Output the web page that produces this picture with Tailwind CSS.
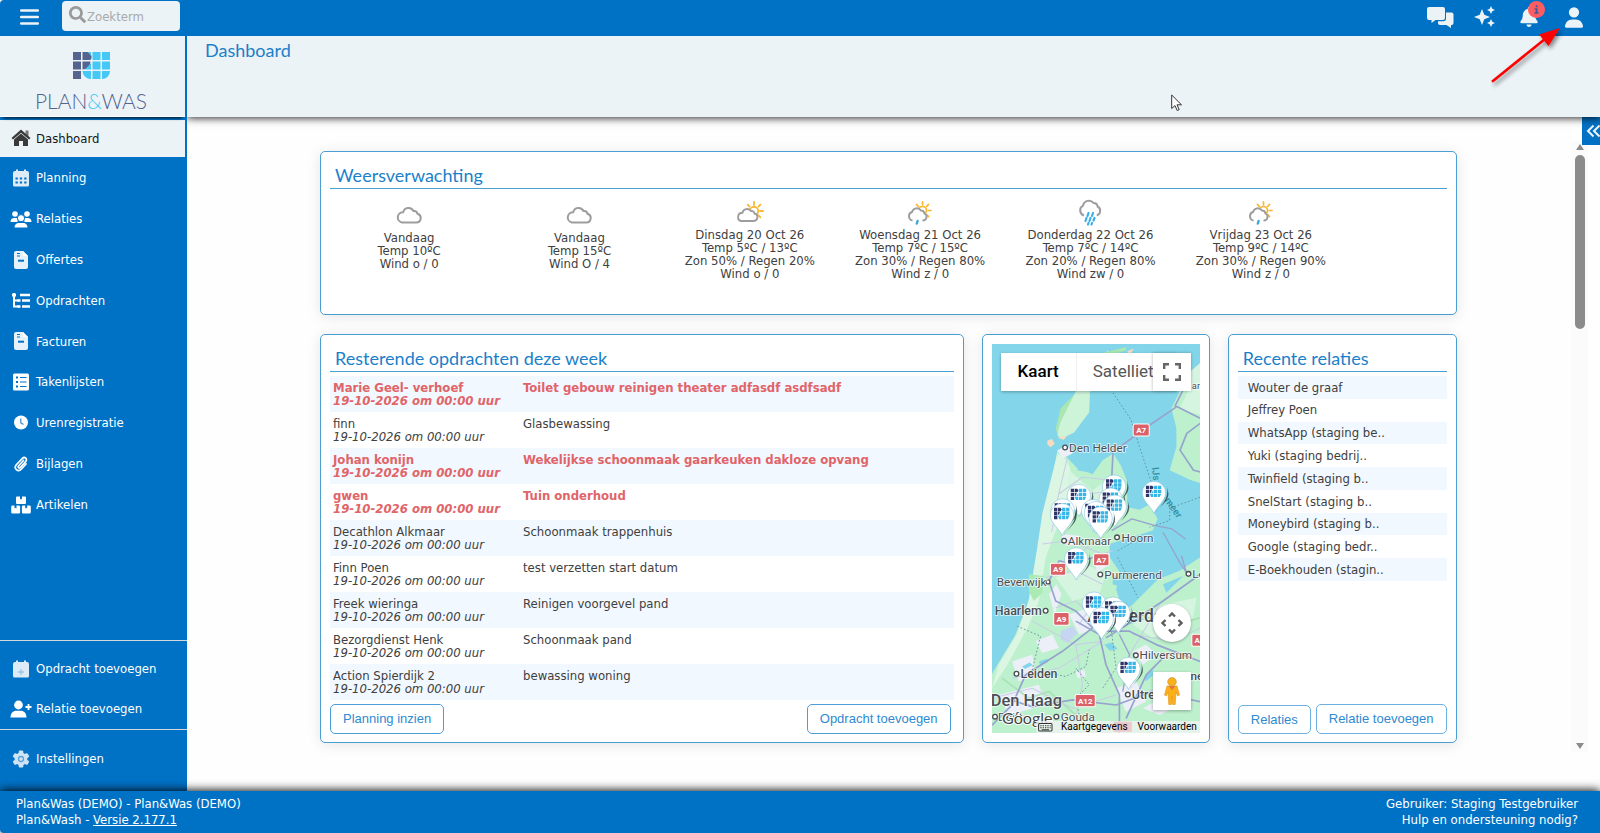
<!DOCTYPE html>
<html lang="nl">
<head>
<meta charset="utf-8">
<title>Plan&amp;Was - Dashboard</title>
<script src="https://cdn.jsdelivr.net/npm/@tailwindcss/browser@4"></script>
</head>
<body class="bg-white">
<svg class="hidden" aria-hidden="true">
  <defs>
    <symbol id="mark" viewBox="0 0 37 27">
      <g fill="#55648f"><path d="M0 0h8v8H0zM0 9.500h8v8H0zM0 19h8v8H0zM9.500 0H13a5 5 0 0 1 4.500 8h-8zM9.500 9.500h8a8 8 0 0 1-8 8z"/></g>
      <g fill="#45c8f5"><path d="M15 0h3v4zM19.500 0h8v8h-8zM29 0h8v8h-8zM19.500 9.500h8v8h-8zM29 9.500h8v8h-8zM18 11v6.500h-6zM9.500 19H18v8a8 8 0 0 1-8.500-8zM19.500 19h8v8h-8zM29 19h8a8 8 0 0 1-8 8z"/></g>
    </symbol>
    <symbol id="pin" viewBox="0 0 84 104" overflow="visible">
      <path d="M40 99C46 80 82 62 79 36L74 14C84 60 50 76 40 99z" fill="#243238" opacity=".75"/>
      <path d="M36 97C28 76 1 60 1 35a35 34 0 0 1 70 0C71 60 44 76 36 97z" fill="#fff" stroke="#6cb9dc" stroke-width="1.500"/>
      <g fill="#2f3566"><path d="M12 14h10v10H12zM12 26h10v10H12zM12 38h10v10H12zM24 14h7l4 5-3 5h-8zM24 26h6l-3 9h-3z"/></g>
      <g fill="#35b5e8"><path d="M36 14h10v10H36zM48 14h10v10H48zM36 26h10v10H36zM48 26h10v10H48zM36 38h10v10H36zM48 38h10l-5 10h-5zM34 27v9h-6zM24 38h10v10h-7z"/></g>
    </symbol>
    <symbol id="file" viewBox="0 0 14 18"><path d="M2 0h7l5 5v11a2 2 0 0 1-2 2H2a2 2 0 0 1-2-2V2a2 2 0 0 1 2-2z" fill="#e6f1f9"/><path d="M9 0l5 5H9z" fill="#fff"/><path d="M3 2.500h3M3 5h3" stroke="#0072c6" stroke-width="1"/><path d="M4 9.700h6" stroke="#0072c6" stroke-width="2"/></symbol>
    <symbol id="cloud" viewBox="0 0 26 18"><path d="M6 16.500h14a4.500 4.500 0 0 0 1.500-8.800A3.500 3.500 0 0 0 17.500 5 5.500 5.500 0 0 0 7.200 6.200 5.200 5.200 0 0 0 6 16.500z" fill="none" stroke="#9d9d9d" stroke-width="2"/></symbol>
    <symbol id="sun" viewBox="0 0 20 20"><circle cx="10" cy="10" r="4.200" fill="none" stroke="#fbb72f" stroke-width="1.800"/><path d="M10 1v3M10 16v3M1 10h3M16 10h3M3.600 3.600l2 2M14.400 14.400l2 2M3.600 16.400l2-2M14.400 5.600l2-2" stroke="#fbb72f" stroke-width="1.800" stroke-linecap="round"/></symbol>
    <symbol id="cloud-sun" viewBox="0 0 28 22"><use href="#sun" x="8" y="0" width="20" height="20"/><path d="M5 20h12.500a3.800 3.800 0 0 0 1-7.500A3 3 0 0 0 15 10a4.800 4.800 0 0 0-8.600 1.800A4.200 4.200 0 0 0 5 20z" fill="#fff" stroke="#9d9d9d" stroke-width="1.900"/></symbol>
    <symbol id="rain-sun" viewBox="0 0 26 26"><use href="#sun" x="6" y="1" width="19" height="19"/><path d="M5.500 20.500A4.400 4.400 0 0 1 5 12a5 5 0 0 1 9-1.500 3.500 3.500 0 0 1 3.500 3A3.700 3.700 0 0 1 15 20.500z" fill="#fff"/><path d="M5.500 20.500A4.400 4.400 0 0 1 5 12a5 5 0 0 1 9-1.500 3.500 3.500 0 0 1 3.500 3A3.700 3.700 0 0 1 15.500 20.500" fill="none" stroke="#9d9d9d" stroke-width="1.900"/><path d="M10.600 21l-.8 2.500" stroke="#3ba7dc" stroke-width="2.400" stroke-linecap="round"/></symbol>
    <symbol id="rain" viewBox="0 0 24 28"><path d="M6 17.500A5.400 5.400 0 0 1 5 7.600 6 6 0 0 1 15.600 5a4 4 0 0 1 4 3.500 4.900 4.900 0 0 1-.8 9" fill="none" stroke="#9d9d9d" stroke-width="2"/><path d="M10.500 15l-1 3M15 15l-1 3M8.500 20l-1 3M12.500 20l-1 3M16.500 20l-1 2.500M10.500 25l-.5 1.500M14 25l-.5 1.500" stroke="#3aaee6" stroke-width="2.200" stroke-linecap="round"/></symbol>
  </defs>
</svg>

<div class="flex min-h-screen flex-col font-['DejaVu_Sans_Condensed','Noto_Sans',sans-serif] text-[13px] text-[#404040]">

  <header class="relative z-30 flex h-9 items-center rounded-tl bg-[#0072c6] pr-4 pb-0.5 pl-5">
    <button type="button" aria-label="Menu" class="h-4 w-5">
      <svg viewBox="0 0 19 16" class="h-4 w-[19px]"><path d="M1.200 1.500h16.600M1.200 8h16.600M1.200 14.500h16.600" stroke="#ebf3f7" stroke-width="2.500" stroke-linecap="round"/></svg>
    </button>
    <label class="mb-0.5 ml-[22px] flex h-[30px] w-[118px] items-center gap-px rounded bg-[#ebf3f7] pl-[7px]">
      <svg viewBox="0 0 512 512" class="mb-1 size-[17px] shrink-0" fill="#999"><path d="M505 442.700L405.300 343c-4.500-4.500-10.600-7-17-7H372c27.600-35.300 44-79.700 44-128C416 93.100 322.900 0 208 0S0 93.100 0 208s93.100 208 208 208c48.300 0 92.700-16.400 128-44v16.300c0 6.400 2.500 12.500 7 17l99.700 99.700c9.400 9.400 24.600 9.400 33.900 0l28.300-28.300c9.400-9.400 9.400-24.600.1-34zM208 336c-70.700 0-128-57.200-128-128 0-70.700 57.200-128 128-128 70.700 0 128 57.200 128 128 0 70.700-57.200 128-128 128z"/></svg>
      <input type="search" aria-label="Zoekterm" placeholder="Zoekterm" class="w-full min-w-0 bg-transparent pt-0.5 outline-none placeholder:text-[#a9a9a9]">
    </label>
    <div class="ml-auto flex items-center">
      <button type="button" aria-label="Berichten" class="mr-5">
        <svg viewBox="0 0 27 21" class="h-[21px] w-[27px]" fill="#ebf3f7"><path d="M2 0h14a2 2 0 0 1 2 2v9a2 2 0 0 1-2 2H8.500L4.500 16v-3H2a2 2 0 0 1-2-2V2a2 2 0 0 1 2-2z"/><path d="M19 5.500h5.500a2 2 0 0 1 2 2v8.500a2 2 0 0 1-2 2H24v3l-4.500-3H13a2 2 0 0 1-2-2v-1.800h5.500A2.500 2.500 0 0 0 19 12z"/></svg>
      </button>
      <button type="button" aria-label="Assistent" class="mr-6">
        <svg viewBox="0 0 22 22" class="size-[22px]" fill="#ebf3f7"><path d="M8 3l2.300 5.700L16 11l-5.700 2.300L8 19l-2.300-5.700L0 11l5.700-2.300zM17 0l1.300 2.700L21 4l-2.700 1.300L17 8l-1.300-2.700L13 4l2.700-1.300zM17 13l1.300 2.700L21 17l-2.700 1.300L17 21l-1.300-2.700L13 17l2.700-1.300z"/></svg>
      </button>
      <button type="button" aria-label="Meldingen" class="relative mr-[27px]">
        <svg viewBox="0 0 448 512" class="h-5 w-[18px]" fill="#ebf3f7"><path d="M224 0c-17.700 0-32 14.300-32 32v19.200C119 66 64 130.600 64 208v18.800c0 47-17.300 92.400-48.500 127.600l-7.400 8.300c-8.400 9.400-10.400 22.900-5.300 34.400S19.400 416 32 416H416c12.600 0 24-7.400 29.200-18.900s3.100-25-5.300-34.400l-7.400-8.300C401.300 319.200 384 273.900 384 226.800V208c0-77.400-55-142-128-156.800V32c0-17.700-14.300-32-32-32zm45.300 493.300c12-12 18.700-28.300 18.700-45.300H160c0 17 6.700 33.300 18.700 45.300s28.300 18.700 45.300 18.700s33.300-6.700 45.300-18.700z"/></svg>
        <span class="absolute -top-1.5 left-2 flex size-[17px] items-center justify-center rounded-full bg-[#ff5c62]">
          <svg viewBox="0 0 6 10" class="h-[9px] w-[5px]"><path d="M2 0h2.200v2.200H2zM.5 3.500h3.700V8.300h1.300V10H.5V8.300H2V5H.5z" fill="#3c5a9a"/></svg>
        </span>
      </button>
      <button type="button" aria-label="Gebruiker" class="mr-px">
        <svg viewBox="0 0 448 512" class="h-[21px] w-[18px]" fill="#ebf3f7"><path d="M224 256A128 128 0 1 0 224 0a128 128 0 1 0 0 256zm-45.700 48C79.800 304 0 383.800 0 482.300C0 498.700 13.300 512 29.700 512H418.300c16.400 0 29.700-13.300 29.700-29.700C448 383.800 368.200 304 269.700 304H178.300z"/></svg>
      </button>
    </div>
  </header>

  <div class="flex flex-1">
    <aside class="relative z-20 flex w-[187px] shrink-0 flex-col bg-[#0072c6]">
      <a href="#" aria-label="Plan&amp;Was" class="relative z-10 mr-0.5 flex h-[81px] flex-col items-center border-b border-white bg-[#ebf3f7] pt-4 pr-[3px] shadow-[0_4px_3px_-3px_rgba(0,0,0,.9)]">
        <svg class="h-[27px] w-[37px]"><use href="#mark"/></svg>
        <span class="mt-2 font-['Lato',sans-serif] text-[21px] leading-7 font-light text-[#55648f]">PLAN<span class="text-[#45c8f5]">&amp;</span>WAS</span>
      </a>
      <nav class="flex flex-1 flex-col text-white">
        <ul class="flex h-[408px] flex-col">
          <li class="flex flex-1"><a href="#" class="mt-[3px] mr-0.5 mb-px flex flex-1 items-center gap-1 bg-[#ebf3f7] pl-2.5 text-[#151515]">
            <svg viewBox="0 0 22 18" class="h-[18px] w-[22px]" fill="#3a3a3a"><path d="M15.500 1.500h3v6h-3z" fill="#777"/><path d="M11 .5l9.500 8.500-1.500 1.500L11 3.800 3 10.500 1.500 9z"/><path d="M4 10.500l7-6 7 6V17h-5v-5H9v5H4z"/></svg>Dashboard</a></li>
          <li class="flex flex-1"><a href="#" class="flex flex-1 items-center gap-1 pl-2.5">
            <svg viewBox="0 0 22 18" class="h-[18px] w-[22px]"><path d="M3 4a2 2 0 0 1 2-2h12a2 2 0 0 1 2 2v12a1.500 1.500 0 0 1-1.500 1.500h-13A1.500 1.500 0 0 1 3 16zM6 .5h2v3H6zM14 .5h2v3h-2z" fill="#dcebf6"/><path d="M5.500 8.500h2.300v2H5.500zM9.800 8.500h2.300v2H9.800zM14.200 8.500h2.300v2h-2.300zM5.500 12.500h2.300v2H5.500zM9.800 12.500h2.300v2H9.800zM14.200 12.500h2.300v2h-2.300z" fill="#0072c6"/></svg>Planning</a></li>
          <li class="flex flex-1"><a href="#" class="flex flex-1 items-center gap-1 pl-2.5">
            <svg viewBox="0 0 22 18" class="h-[18px] w-[22px]" fill="#fff"><circle cx="5" cy="4" r="2.800"/><circle cx="17" cy="4" r="2.800"/><path d="M.5 12a4 4 0 0 1 4-4h2.500l1 3-1 1zM21.500 12a4 4 0 0 0-4-4H15l-1 3 1 1z"/><circle cx="11" cy="8.200" r="3.600" stroke="#0072c6"/><path d="M4.500 17.500c0-3 2-4.500 4-4.500h5c2 0 4 1.500 4 4.500z"/></svg>Relaties</a></li>
          <li class="flex flex-1"><a href="#" class="flex flex-1 items-center gap-1 pl-2.5"><svg class="h-[18px] w-[22px]"><use href="#file"/></svg>Offertes</a></li>
          <li class="flex flex-1"><a href="#" class="flex flex-1 items-center gap-1 pl-2.5">
            <svg viewBox="0 0 22 18" class="h-[18px] w-[22px]" fill="none" stroke="#fff" stroke-width="2"><path d="M4 1v13.500h5M4 8.500h5"/><path d="M2 3h4" stroke-width="3"/><path d="M10 3h10M7.500 8.500h3M12 8.500h8M7.500 14.500h3M12 14.500h8" stroke-width="2.600"/></svg>Opdrachten</a></li>
          <li class="flex flex-1"><a href="#" class="flex flex-1 items-center gap-1 pl-2.5"><svg class="h-[18px] w-[22px]"><use href="#file"/></svg>Facturen</a></li>
          <li class="flex flex-1"><a href="#" class="flex flex-1 items-center gap-1 pl-2.5">
            <svg viewBox="0 0 22 18" class="h-[18px] w-[22px]"><rect x="3" y=".5" width="16" height="17" rx="1.500" fill="#fff"/><path d="M6 4.500h2M6 9h2M6 13.500h2" stroke="#0072c6" stroke-width="2"/><path d="M10 4.500h6.500M10 9h6.500M10 13.500h6.500" stroke="#0072c6" stroke-width="1.200"/></svg>Takenlijsten</a></li>
          <li class="flex flex-1"><a href="#" class="flex flex-1 items-center gap-1 pl-2.5">
            <svg viewBox="0 0 22 18" class="h-[18px] w-[22px]"><circle cx="11" cy="8.500" r="7" fill="#fff"/><path d="M10.800 4.500v4.300l2.700 1.700" fill="none" stroke="#4b94cf" stroke-width="1.300"/></svg>Urenregistratie</a></li>
          <li class="flex flex-1"><a href="#" class="flex flex-1 items-center gap-1 pl-2.5">
            <svg viewBox="0 0 22 18" class="h-[18px] w-[22px]" fill="none" stroke="#fff" stroke-width="1.700" stroke-linecap="round"><path d="M13.500 5.500l-5 5.500c-1 1.200.6 2.700 1.700 1.600l5.500-6c2.300-2.500-1-5.600-3.500-3L6.500 9.500c-3.400 3.800 1.400 8.300 5 4.500l4.500-5"/></svg>Bijlagen</a></li>
          <li class="flex flex-1"><a href="#" class="flex flex-1 items-center gap-1 pl-2.5">
            <svg viewBox="0 0 22 18" class="h-[18px] w-[22px]"><path d="M7 .5h3v3l1-.8 1 .8v-3h3a1 1 0 0 1 1 1V7a1 1 0 0 1-1 1H7a1 1 0 0 1-1-1V1.500a1 1 0 0 1 1-1zM2.500 9.500h2v3l1-.8 1 .8v-3h2.300a1.300 1.300 0 0 1 1.300 1.300v5.400a1.300 1.300 0 0 1-1.300 1.300H2.500a1.300 1.300 0 0 1-1.300-1.300v-5.400a1.300 1.300 0 0 1 1.300-1.300zM13.200 9.500h2v3l1-.8 1 .8v-3h2.300a1.300 1.300 0 0 1 1.300 1.300v5.400a1.300 1.300 0 0 1-1.300 1.300h-6.300a1.300 1.300 0 0 1-1.300-1.300v-5.400a1.300 1.300 0 0 1 1.300-1.300z" fill="#fff"/></svg>Artikelen</a></li>
        </ul>
        <ul class="mt-auto flex flex-col border-y border-[#d3d8dc] pt-2">
          <li class="flex h-10"><a href="#" class="flex flex-1 items-center gap-1 pl-2.5">
            <svg viewBox="0 0 22 18" class="h-[18px] w-[22px]"><path d="M3 4a2 2 0 0 1 2-2h12a2 2 0 0 1 2 2v12a1.500 1.500 0 0 1-1.500 1.500h-13A1.500 1.500 0 0 1 3 16zM6 .5h2v3H6zM14 .5h2v3h-2z" fill="#dcebf6"/><path d="M11 9v6M8 12h6" stroke="#9cc5e6" stroke-width="1.300"/></svg>Opdracht toevoegen</a></li>
          <li class="flex h-10"><a href="#" class="flex flex-1 items-center gap-1 pl-2.5">
            <svg viewBox="0 0 22 18" class="h-[18px] w-[22px]" fill="#fff"><circle cx="8.500" cy="5" r="4.400"/><path d="M.5 17.500c0-4 2.500-6.700 6-6.700h4c3.500 0 6 2.700 6 6.700z"/><path d="M18.500 4v6M15.500 7h6" stroke="#fff" stroke-width="1.800"/></svg>Relatie toevoegen</a></li>
        </ul>
        <a href="#" class="mb-3 flex h-[49px] items-center gap-1 pt-2 pl-2.5">
          <svg viewBox="0 0 22 18" class="h-[18px] w-[22px]"><g fill="#cfe3f3"><circle cx="11" cy="9" r="6.400"/><rect x="8.700" y=".5" width="4.600" height="17" rx="1.200"/><rect x="8.700" y=".5" width="4.600" height="17" rx="1.200" transform="rotate(60 11 9)"/><rect x="8.700" y=".5" width="4.600" height="17" rx="1.200" transform="rotate(120 11 9)"/></g><circle cx="11" cy="9" r="2.500" fill="none" stroke="#5ba3d9" stroke-width="1.300"/></svg>Instellingen</a>
      </nav>
    </aside>

    <main class="relative flex min-w-0 flex-1 flex-col bg-[#fefefe]">
      <div class="relative z-10 h-[81px] bg-[#ebf3f7] pl-[18px] shadow-[0_1px_8px_rgba(0,0,0,.85)]">
        <h1 class="pt-0.5 font-['Lato',sans-serif] text-[18px] leading-6 text-[#1b7fca]">Dashboard</h1>
      </div>
      <button type="button" aria-label="Paneel openen" class="absolute top-[81px] right-0 flex h-7 w-[18px] items-center bg-[#0072c6] pl-1">
        <svg viewBox="0 0 14 14" class="size-3.5" fill="none" stroke="#ebf3f7" stroke-width="2"><path d="M7.500 1.500L2 7l5.500 5.500M13.500 1.500L8 7l5.500 5.500"/></svg>
      </button>

      <div class="flex flex-1 pt-6">
        <div class="min-w-0 flex-1 pt-[10px] pr-[114px] pb-[47px] pl-[133px]">
          <section class="h-[164px] rounded-[5px] border border-[#4a9fd0] bg-white shadow-[0_2px_14px_rgba(0,0,0,.1)]">
            <h2 class="mx-[9px] border-b border-[#4a9fd0] pt-[11px] pb-px pl-[5px] font-['Lato',sans-serif] text-[18px] leading-6 text-[#1b7fca]">Weersverwachting</h2>
            <div class="grid grid-cols-6 pr-[110px] pl-[3px] text-center leading-[13px]">
              <div class="pt-[17px]"><svg class="mx-auto mb-[7px] h-[18px] w-[26px]"><use href="#cloud"/></svg><p>Vandaag</p><p>Temp 10ºC</p><p>Wind o / 0</p></div>
              <div class="pt-[17px]"><svg class="mx-auto mb-[7px] h-[18px] w-[26px]"><use href="#cloud"/></svg><p>Vandaag</p><p>Temp 15ºC</p><p>Wind O / 4</p></div>
              <div class="pt-3"><svg class="mx-auto mb-[5px] h-[22px] w-7"><use href="#cloud-sun"/></svg><p>Dinsdag 20 Oct 26</p><p>Temp 5ºC / 13ºC</p><p>Zon 50% / Regen 20%</p><p>Wind o / 0</p></div>
              <div class="pt-[11px]"><svg class="mx-auto mb-0.5 size-[26px]"><use href="#rain-sun"/></svg><p>Woensdag 21 Oct 26</p><p>Temp 7ºC / 15ºC</p><p>Zon 30% / Regen 80%</p><p>Wind z / 0</p></div>
              <div class="pt-[9px]"><svg class="mx-auto mb-0.5 h-7 w-6"><use href="#rain"/></svg><p>Donderdag 22 Oct 26</p><p>Temp 7ºC / 14ºC</p><p>Zon 20% / Regen 80%</p><p>Wind zw / 0</p></div>
              <div class="pt-[11px]"><svg class="mx-auto mb-0.5 size-[26px]"><use href="#rain-sun"/></svg><p>Vrijdag 23 Oct 26</p><p>Temp 9ºC / 14ºC</p><p>Zon 30% / Regen 90%</p><p>Wind z / 0</p></div>
            </div>
          </section>

          <div class="mt-[19px] grid grid-cols-[minmax(0,643fr)_minmax(0,228fr)_minmax(0,229fr)] gap-[18px]">
            <section class="flex flex-col rounded-[5px] border border-[#4a9fd0] bg-white px-[9px] pb-2 shadow-[0_2px_14px_rgba(0,0,0,.1)]">
              <h2 class="mb-1 border-b border-[#4a9fd0] pt-[11px] pb-px pl-[5px] font-['Lato',sans-serif] text-[18px] leading-6 text-[#1b7fca]">Resterende opdrachten deze week</h2>
              <table class="w-full table-fixed text-left leading-[13px]">
                <colgroup><col class="w-[190px]"><col></colgroup>
                <tbody>
                  <tr class="h-9 bg-[#f2f8ff] align-top font-bold text-[#e06468]"><td class="pt-[5px] pl-[3px]">Marie Geel- verhoef<br><i>19-10-2026 om 00:00 uur</i></td><td class="pt-[5px] pl-[3px]">Toilet gebouw reinigen theater adfasdf asdfsadf</td></tr>
                  <tr class="h-9 align-top"><td class="pt-[5px] pl-[3px]">finn<br><i>19-10-2026 om 00:00 uur</i></td><td class="pt-[5px] pl-[3px]">Glasbewassing</td></tr>
                  <tr class="h-9 bg-[#f2f8ff] align-top font-bold text-[#e06468]"><td class="pt-[5px] pl-[3px]">Johan konijn<br><i>19-10-2026 om 00:00 uur</i></td><td class="pt-[5px] pl-[3px]">Wekelijkse schoonmaak gaarkeuken dakloze opvang</td></tr>
                  <tr class="h-9 align-top font-bold text-[#e06468]"><td class="pt-[5px] pl-[3px]">gwen<br><i>19-10-2026 om 00:00 uur</i></td><td class="pt-[5px] pl-[3px]">Tuin onderhoud</td></tr>
                  <tr class="h-9 bg-[#f2f8ff] align-top"><td class="pt-[5px] pl-[3px]">Decathlon Alkmaar<br><i>19-10-2026 om 00:00 uur</i></td><td class="pt-[5px] pl-[3px]">Schoonmaak trappenhuis</td></tr>
                  <tr class="h-9 align-top"><td class="pt-[5px] pl-[3px]">Finn Poen<br><i>19-10-2026 om 00:00 uur</i></td><td class="pt-[5px] pl-[3px]">test verzetten start datum</td></tr>
                  <tr class="h-9 bg-[#f2f8ff] align-top"><td class="pt-[5px] pl-[3px]">Freek wieringa<br><i>19-10-2026 om 00:00 uur</i></td><td class="pt-[5px] pl-[3px]">Reinigen voorgevel pand</td></tr>
                  <tr class="h-9 align-top"><td class="pt-[5px] pl-[3px]">Bezorgdienst Henk<br><i>19-10-2026 om 00:00 uur</i></td><td class="pt-[5px] pl-[3px]">Schoonmaak pand</td></tr>
                  <tr class="h-9 bg-[#f2f8ff] align-top"><td class="pt-[5px] pl-[3px]">Action Spierdijk 2<br><i>19-10-2026 om 00:00 uur</i></td><td class="pt-[5px] pl-[3px]">bewassing woning</td></tr>
                </tbody>
              </table>
              <div class="mt-auto flex justify-between pt-1 pr-[3px] font-['Liberation_Sans',Arial,sans-serif] text-[13px] text-[#2f8ad0]">
                <button type="button" class="h-[30px] rounded-[5px] border border-[#4a9fd8] px-3">Planning inzien</button>
                <button type="button" class="h-[30px] rounded-[5px] border border-[#4a9fd8] px-3">Opdracht toevoegen</button>
              </div>
            </section>

            <section class="flex rounded-[5px] border border-[#4a9fd0] bg-white p-[9px] shadow-[0_2px_14px_rgba(0,0,0,.1)]">
              <div class="relative h-[389px] w-full overflow-hidden bg-[#83d6ea] font-['Roboto',sans-serif]">
                <svg viewBox="0 0 621 1167" preserveAspectRatio="xMidYMid slice" class="size-full" font-family="Roboto, sans-serif">
                  <path d="M195 320L224 342 252 372 300 392 330 350 362 330 384 365 402 410 404 490 440 498 470 482 494 525 479 560 400 585 350 600 352 640 385 690 370 735 390 795 415 785 495 705 560 680 621 640V1167H0V987L69 872 109 772 134 672 144 572 152 530 178 420z" fill="#bdf0cd"/>
                  <path d="M195 330l29 20 20 60-20 90-34 60-30 80-20 130-34 80-60 110-46 70 20-70 54-90 35-100 26-160 15-100z" fill="#dcf6e4"/>
                  <path d="M230 380l70 60 40-30 40 20-10 80-90 10-60-40zM190 700l90-40 60 30-20 60-80 20zM420 840l90-60 100-20-10 60-120 60z" fill="#d6f5e0"/>
                  <path d="M110 690l45 5-5 50-25 25-15-30z" fill="#a9ebb3"/>
                  <path d="M345 22c-20 40-70 60-100 133-25 30-45 80-50 120l10 12 40-20 45-60 2-60 60-110z" fill="#cdf3d9"/>
                  <path d="M245 155l-45 90-5 30-5-20 15-60zM330 30l70-18 0 10-60 20z" fill="#a9e6b0"/>
                  <path d="M403 25l20-8-12 20zM165 292l14-5 8 14-12 10-10-8zM196 282l28-6-10 14z" fill="#f7dcc0"/>
                  <path d="M621 60l-36 35-50 100 15 60 0 55-20 70 60 28 31 10z" fill="#bdf0cd"/>
                  <path d="M580 95l10 40-30 60 61 20V60z" fill="#d6f5e0"/>
                  <g fill="#eceff8"><path d="M195 320l30-15 15 25-30 15zM230 810l60-20 20 60-50 20zM60 950l60-20 10 60-50 20zM20 1050l120-30 20 60-110 30zM370 1030l60-20 30 60-60 30zM210 570l50 5-10 30-45-5zM170 750l22-30 15 30-20 60zM420 920l40-20 30 30-40 30zM130 890l50-20 20 40-50 15zM250 980l25-5 5 20-25 5zM450 1090l70-40 40 30-60 30zM300 640l30-10 15 35-30 20z"/></g>
                  <path d="M205 860l35-15 15 20-30 30-20-10z" fill="#c6d6f2"/>
                  <g fill="#83d6ea"><path d="M255 365l50 10-10 12-40-6zM335 900l22-6 18 18-24 6zM395 830l40-16 20 10-40 14zM90 965l22-12 10 8-24 12zM140 950l24-8 4 10-24 10zM360 690l40 20-10 20-30-10zM455 995l24-20 4 14-24 20zM510 720l60-25-50 50z"/></g>
                  <g fill="none" stroke="#a9e2b4" stroke-width="5"><path d="M30 1000l80 60 60-20 80 70M430 800l90 50 100-30M230 460l60 60"/></g>
                  <g fill="none" stroke="#c8cde6" stroke-width="3"><path d="M224 345l-26 110-20 110M200 450l70-50 80 10M230 460l130-20M150 600l80-10 100 40 30-10M160 700l90-20 80 40M190 790l60-20 60 60M120 830l130 70 80-10M60 1000l140-30 130-80M0 1060l120-30 120 60 130-40M250 900l20 120-30 140M500 780l-90 150M420 870l120 20 81-40M440 1050l120-50 61-10M360 500l-40 80-60 50M300 780l-40 60"/></g>
                  <g fill="none" stroke="#96a3cd" stroke-width="5" stroke-linejoin="round"><path d="M621 225l-70-35-80 55-110 80-6 120 10 70"/><path d="M570 80l5 50-30 60M621 240l-40 30-20 50 40 60 20 5"/><path d="M300 640l-60 20-40-10-30 60 20 60 60 30 50 50-90 70-110 70-40 90-60 60"/><path d="M250 830l70 40 20 90 40 90 0 117M320 860l90 0 80 40 131 50M340 880l80-50 90-60 111-80M40 1060l80 25 120-20 130 15 110-40 141 30M400 1120l60-130 60-60"/><path d="M357 560l60-35 70 20 50 10 40 30M380 870l30 60-20 110" stroke-width="4"/><path d="M510 565l50 90 20 30-15-50" stroke-width="4"/></g>
                  <g fill="none" stroke="#5c8a94" stroke-width="2.500" stroke-dasharray="5 6"><path d="M355 140l60 90 15 50 50 150 60 60 81-30M530 480v50l-60 20M375 620l70-40M375 640l60 120M355 850l15 120-40 60M75 845l70 30-25 100 100 20 60-30 10-50M250 970l40 50-40 40 10 50"/></g>
                  <g font-size="29" fill="#318fa4" font-weight="500"><text transform="translate(477 372) rotate(84)">IJs</text><text transform="translate(514 470) rotate(55)">meer</text></g>
                  <g stroke="#fff" stroke-width="3" fill="#dc6068"><rect x="421" y="242" width="48" height="36" rx="5"/><rect x="303" y="629" width="46" height="36" rx="5"/><rect x="174" y="657" width="46" height="36" rx="5"/><rect x="184" y="804" width="46" height="38" rx="5"/><rect x="248" y="1049" width="60" height="36" rx="5"/><rect x="596" y="869" width="48" height="36" rx="5"/></g>
                  <g fill="#fff" font-size="24" font-weight="700" text-anchor="middle"><text x="445" y="269">A7</text><text x="326" y="656">A7</text><text x="197" y="684">A9</text><text x="207" y="832">A9</text><text x="278" y="1076">A12</text><text x="612" y="896">A</text></g>
                  <g fill="#fff" stroke="#4a4f55" stroke-width="4"><circle cx="218" cy="312" r="7"/><circle cx="215" cy="590" r="7"/><circle cx="373" cy="580" r="7"/><circle cx="323" cy="691" r="7"/><circle cx="167" cy="713" r="6"/><circle cx="160" cy="799" r="7"/><circle cx="586" cy="689" r="7"/><circle cx="429" cy="932" r="7"/><circle cx="73" cy="987" r="7"/><circle cx="405" cy="1049" r="7"/><circle cx="9" cy="1115" r="7"/><circle cx="192" cy="1115" r="7"/></g>
                  <g font-size="35" fill="#4a4f55" stroke="#fff" stroke-width="5" stroke-opacity=".75" paint-order="stroke"><text x="230" y="325">Den Helder</text><text x="226" y="602">Alkmaar</text><text x="386" y="593">Hoorn</text><text x="335" y="703">Purmerend</text><text x="14" y="726">Beverwijk</text><text x="8" y="811" font-size="37" font-weight="500">Haarlem</text><text x="597" y="701">Lelystad</text><text x="440" y="943">Hilversum</text><text x="85" y="1000" font-size="37" font-weight="500">Leiden</text><text x="417" y="1061" font-size="37" font-weight="500">Utrecht</text><text x="596" y="137" font-size="28">ar</text><text x="18" y="1127">Delft</text><text x="205" y="1127">Gouda</text><text x="592" y="1006" font-weight="500">ne</text><text x="-4" y="1083" font-size="49" font-weight="500">Den Haag</text><text x="284" y="834" font-size="52" font-weight="500">Amsterdam</text></g>
                  <g>
                    <use href="#pin" x="328" y="393" width="84" height="104"/><use href="#pin" x="223" y="421" width="84" height="104"/><use href="#pin" x="318" y="432" width="84" height="104"/><use href="#pin" x="330" y="453" width="84" height="104"/><use href="#pin" x="175" y="464" width="84" height="104"/><use href="#pin" x="173" y="478" width="84" height="104"/><use href="#pin" x="266" y="466" width="84" height="104"/><use href="#pin" x="274" y="472" width="84" height="104"/><use href="#pin" x="288" y="488" width="84" height="104"/><use href="#pin" x="447" y="412" width="84" height="104"/>
                    <use href="#pin" x="215" y="610" width="84" height="104"/><use href="#pin" x="268" y="742" width="84" height="104"/><use href="#pin" x="325" y="757" width="84" height="104"/><use href="#pin" x="341" y="770" width="84" height="104"/><use href="#pin" x="291" y="788" width="84" height="104"/><use href="#pin" x="371" y="937" width="84" height="104"/>
                  </g>
                  <text x="30" y="1137" font-family="Lato, sans-serif" font-size="48" fill="#444" stroke="#fff" stroke-width="6" paint-order="stroke">Google</text>
                  <path d="M132 1128H621v39H132z" fill="#f1f4f3" opacity=".78"/>
                  <path d="M363 1130h54v30h-54z" fill="#f0aeb6" opacity=".6"/>
                  <rect x="139" y="1135" width="40" height="23" rx="3" fill="none" stroke="#333" stroke-width="3"/><path d="M144 1142h31M144 1148h31" stroke="#333" stroke-width="3.500" stroke-dasharray="4 3"/><path d="M148 1154h22" stroke="#333" stroke-width="3"/>
                </svg>
                <div class="absolute top-[9px] left-[9px] flex h-[38px] bg-white text-[17px] shadow-[0_1px_3px_rgba(0,0,0,.3)]">
                  <button type="button" class="border-r border-[#eee] px-[17px] font-medium text-black">Kaart</button>
                  <button type="button" class="w-[100px] pl-4 text-left text-[#565656]">Satelliet</button>
                </div>
                <button type="button" aria-label="Volledig scherm" class="absolute top-[9px] right-[9px] flex size-[38px] items-center justify-center bg-white shadow-[0_0_3px_rgba(0,0,0,.3)]">
                  <svg viewBox="0 0 18 18" class="size-[18px]" fill="none" stroke="#666" stroke-width="2.400"><path d="M1.200 6V1.200H6M12 1.200h4.800V6M16.800 12v4.800H12M6 16.800H1.200V12"/></svg>
                </button>
                <button type="button" aria-label="Camerabediening" class="absolute right-[9px] bottom-[91px] flex size-[38px] items-center justify-center rounded-full bg-white shadow-[0_1px_3px_rgba(0,0,0,.3)]">
                  <svg viewBox="0 0 22 22" class="size-[22px]" fill="none" stroke="#5c5c5c" stroke-width="2.400"><path d="M8 4.500l3-3 3 3M8 17.500l3 3 3-3M4.500 8l-3 3 3 3M17.500 8l3 3-3 3"/></svg>
                </button>
                <button type="button" aria-label="Street View" class="absolute right-[9px] bottom-[23px] flex size-[38px] items-center justify-center bg-white shadow-[0_1px_3px_rgba(0,0,0,.3)]">
                  <svg viewBox="0 0 16 28" class="h-7 w-4"><path d="M3 9h10l2.500 9-2 .8L12 15l-.8 12.500H8.600L8 19l-.6 8.500H4.800L4 15l-1.500 3.800-2-.8z" fill="#fbb01a" stroke="#e09112" stroke-width=".6"/><circle cx="8" cy="4.800" r="4.300" fill="#fbb01a" stroke="#b98a3a" stroke-width=".6"/><path d="M4.500 9h7L8 13z" fill="#e4763a"/></svg>
                </button>
                <div class="absolute right-[3px] bottom-0 flex h-3 items-center gap-2.5 text-[10px] leading-3 text-black"><a href="#">Kaartgegevens</a><a href="#">Voorwaarden</a></div>
              </div>
            </section>

            <section class="flex flex-col rounded-[5px] border border-[#4a9fd0] bg-white px-[9px] pb-2 shadow-[0_2px_14px_rgba(0,0,0,.1)]">
              <h2 class="mb-1 border-b border-[#4a9fd0] pt-[11px] pb-px pl-[5px] font-['Lato',sans-serif] text-[18px] leading-6 text-[#1b7fca]">Recente relaties</h2>
              <ul class="grid h-[205px] auto-rows-fr items-stretch">
                <li class="flex items-center bg-[#f2f8ff] pl-2.5">Wouter de graaf</li>
                <li class="flex items-center pl-2.5">Jeffrey Poen</li>
                <li class="flex items-center bg-[#f2f8ff] pl-2.5">WhatsApp (staging be..</li>
                <li class="flex items-center pl-2.5">Yuki (staging bedrij..</li>
                <li class="flex items-center bg-[#f2f8ff] pl-2.5">Twinfield (staging b..</li>
                <li class="flex items-center pl-2.5">SnelStart (staging b..</li>
                <li class="flex items-center bg-[#f2f8ff] pl-2.5">Moneybird (staging b..</li>
                <li class="flex items-center pl-2.5">Google (staging bedr..</li>
                <li class="flex items-center bg-[#f2f8ff] pl-2.5">E-Boekhouden (stagin..</li>
              </ul>
              <div class="mt-auto flex items-end gap-[5px] font-['Liberation_Sans',Arial,sans-serif] text-[13px] text-[#2f8ad0]">
                <button type="button" class="h-[29px] rounded-[5px] border border-[#6bb0e0] px-3">Relaties</button>
                <button type="button" class="h-[30px] rounded-[5px] border border-[#6bb0e0] px-3 whitespace-nowrap">Relatie toevoegen</button>
              </div>
            </section>
          </div>
        </div>

        <div class="mr-3 mb-[39px] flex w-[17px] flex-col items-center bg-[#fbfbfb] py-[3px]">
          <svg viewBox="0 0 8 6" class="h-1.5 w-2"><path d="M4 0l4 6H0z" fill="#8b8b8b"/></svg>
          <div class="mt-[5px] h-[174px] w-2.5 rounded-full bg-[#8b8b8b]"></div>
          <svg viewBox="0 0 8 6" class="mt-auto h-1.5 w-2"><path d="M0 0h8L4 6z" fill="#8b8b8b"/></svg>
        </div>
      </div>
    </main>
  </div>

  <footer class="relative z-20 flex h-[42px] justify-between rounded-bl bg-[#0072c6] px-4 pt-[5px] pr-[22px] leading-4 text-white shadow-[0_-1px_10px_rgba(0,0,0,.95)]">
    <div><p>Plan&amp;Was (DEMO) - Plan&amp;Was (DEMO)</p><p>Plan&amp;Wash - <a href="#" class="underline">Versie 2.177.1</a></p></div>
    <div class="text-right"><p>Gebruiker: Staging Testgebruiker</p><p><a href="#">Hulp en ondersteuning nodig?</a></p></div>
  </footer>
</div>

<!-- Pointer and the arrow towards the user button -->
<svg viewBox="0 0 12 18" class="absolute top-[94px] left-[1171px] z-40 h-[18px] w-3" aria-hidden="true"><path d="M.7 1v13.500L4 11.600l2.200 4.900 2-.9L6 10.800h4.500z" fill="#fff" stroke="#333" stroke-width="1"/></svg>
<svg viewBox="0 0 76 62" class="absolute top-6 right-[35px] z-40 h-[62px] w-[76px] drop-shadow-[2px_3px_2px_rgba(0,0,0,.45)]" aria-hidden="true"><path d="M3 57.700L56 15" stroke="#f00" stroke-width="2.600"/><path d="M71 4L50 10.500 59.500 22z" fill="#f00"/></svg>
</body>
</html>
